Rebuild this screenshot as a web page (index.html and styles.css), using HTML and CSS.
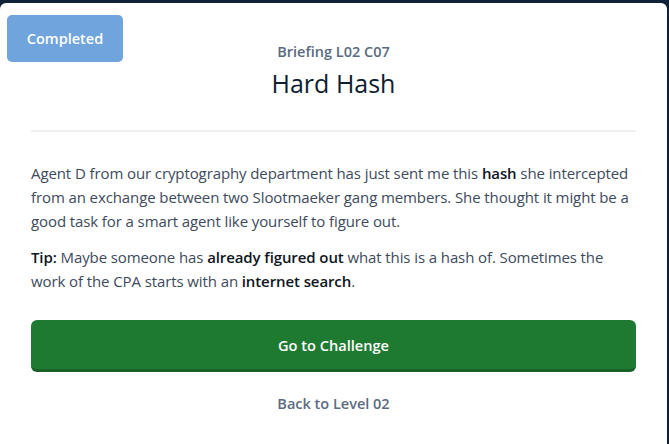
FILE: index.html
```html
<!DOCTYPE html>
<html>
<head>
<meta charset="utf-8">
<link rel="stylesheet" href="styles.css">
</head>
<body>
<div class="frame">
  <div class="card">
    <span class="badge">Completed</span>
    <header class="head">
      <div class="kicker">Briefing L02 C07</div>
      <h1 class="title">Hard Hash</h1>
    </header>
    <hr class="divider">
    <p class="text">Agent D from our cryptography department has just sent me this <b>hash</b> she intercepted from an exchange between two Slootmaeker gang members. She thought it might be a good task for a smart agent like yourself to figure out.</p>
    <p class="text"><b>Tip:</b> Maybe someone has <b>already figured out</b> what this is a hash of. Sometimes the work of the CPA starts with an <b>internet search</b>.</p>
    <a class="cta">Go to Challenge</a>
    <a class="back">Back to Level 02</a>
  </div>
</div>
</body>
</html>
```

FILE: styles.css
```css
html, body {
  margin: 0;
  padding: 0;
  background: #0f2238;
}
body {
  width: 669px;
  height: 444px;
  overflow: hidden;
  font-family: "Open Sans", "Liberation Sans", sans-serif;
}
.frame {
  padding-top: 3px;
}
.card {
  position: relative;
  background: #ffffff;
  border-radius: 6px 6px 0 0;
  height: 441px;
  padding: 0 31px;
  box-sizing: border-box;
  margin-right: 2px;
}
.badge {
  position: absolute;
  left: 7px;
  top: 12px;
  width: 116px;
  height: 47px;
  background: #6fa4dc;
  color: #ffffff;
  border-radius: 5px;
  font-size: 14.5px;
  font-weight: 600;
  display: flex;
  align-items: center;
  justify-content: center;
}
.head {
  padding-top: 39px;
  text-align: center;
}
.kicker {
  color: #5b6b80;
  font-size: 14.5px;
  font-weight: 600;
  line-height: 20px;
}
.title {
  margin: 6px 0 0;
  color: #0f1d30;
  font-size: 25px;
  font-weight: 500;
  line-height: 30px;
}
.divider {
  border: 0;
  height: 2px;
  background: #eef0f4;
  margin: 32px 0 0;
}
.text {
  margin: 29px 0 0;
  color: #3d4a5c;
  font-size: 15px;
  letter-spacing: -0.1px;
  line-height: 24px;
}
.text + .text {
  margin-top: 12px;
}
.text b {
  color: #0d1522;
  font-weight: 600;
}
.cta {
  display: flex;
  align-items: center;
  justify-content: center;
  margin-top: 27px;
  height: 49px;
  background: #1f7a31;
  border-bottom: 3px solid #186127;
  border-radius: 6px;
  color: #ffffff;
  font-size: 14.6px;
  font-weight: 600;
}
.back {
  display: block;
  text-align: center;
  margin-top: 22px;
  color: #5b6b80;
  font-size: 14.5px;
  font-weight: 600;
  line-height: 20px;
}
```
